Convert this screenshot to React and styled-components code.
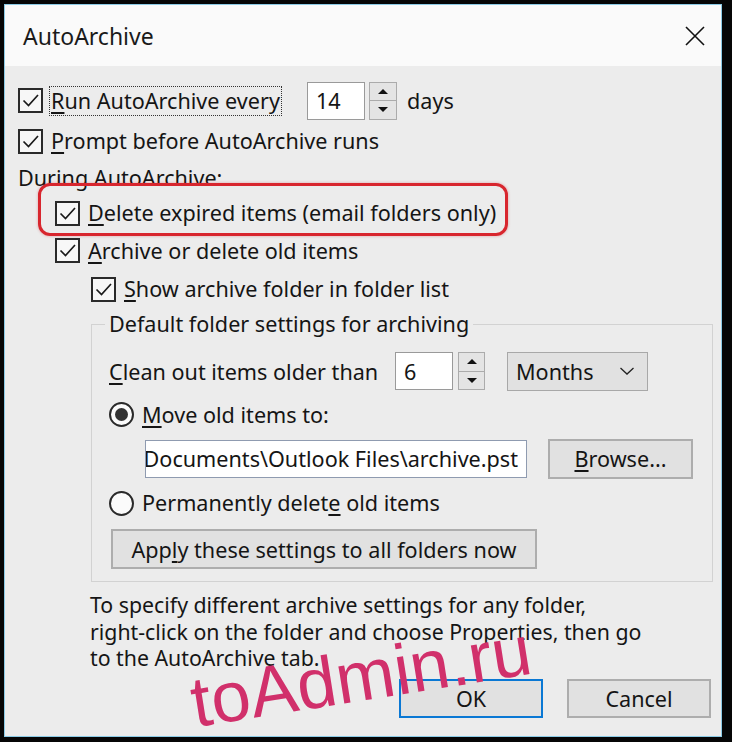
import React from 'react';
import styled, { createGlobalStyle } from 'styled-components';

const GlobalStyle = createGlobalStyle`
  html, body { margin: 0; padding: 0; background: #060606; }
  body { font-family: "Noto Sans", "Liberation Sans", sans-serif; }
`;

const Frame = styled.div`
  width: 732px;
  height: 742px;
  box-sizing: border-box;
  padding: 4px 10px 5px 4px;
  background: #060606;
`;

const Dialog = styled.div`
  position: relative;
  height: 100%;
  box-sizing: border-box;
  border: 1px solid #8ccbe6;
  background: #ececec;
  display: flex;
  flex-direction: column;
  color: #151515;
  font-size: 21.6px;
`;

const TitleBar = styled.div`
  height: 61px;
  flex: none;
  background: #fafafa;
  display: flex;
  align-items: center;
  justify-content: space-between;
  padding: 0 14px 0 18px;
`;

const TitleText = styled.div`
  font-size: 23px;
  color: #1a1a1a;
`;

const Body = styled.div`
  flex: 1;
  display: flex;
  flex-direction: column;
  padding: 14px 8px 18px 13px;
`;

const Row = styled.div`
  position: relative;
  display: flex;
  align-items: center;
  height: ${p => p.$h}px;
  margin-top: ${p => p.$mt || 0}px;
  padding-left: ${p => p.$indent || 0}px;
  flex: none;
`;

const Box = styled.span`
  width: 25px;
  height: 25px;
  box-sizing: border-box;
  border: 2px solid #2a2a2a;
  background: #f7f7f7;
  display: inline-flex;
  align-items: center;
  justify-content: center;
  flex: none;
  margin-right: ${p => p.$gap ?? 8}px;
`;

const RadioCircle = styled.span`
  width: 25px;
  height: 25px;
  box-sizing: border-box;
  border: 2px solid #2a2a2a;
  border-radius: 50%;
  background: #fbfbfb;
  display: inline-flex;
  align-items: center;
  justify-content: center;
  flex: none;
  margin-right: 8px;
`;

const RadioDot = styled.span`
  width: 13px;
  height: 13px;
  border-radius: 50%;
  background: #333;
`;

const Label = styled.span`
  white-space: nowrap;
  line-height: 26px;
`;

const FocusLabel = styled.span`
  white-space: nowrap;
  box-sizing: border-box;
  width: 233px;
  height: 30px;
  line-height: 28px;
  padding: 0 1px;
  border: 1px dotted #333;
`;

const FixedLabel = styled.span`
  white-space: nowrap;
  width: ${p => p.$w}px;
  flex: none;
`;

const Acc = styled.span`
  text-decoration: underline;
  text-underline-offset: 3px;
  text-decoration-thickness: 1.5px;
`;

const NumInput = styled.div`
  width: 58px;
  height: 38px;
  box-sizing: border-box;
  border: 1px solid #9a9a9a;
  background: #fff;
  padding-left: 8px;
  display: flex;
  align-items: center;
  margin-left: ${p => p.$ml || 0}px;
  flex: none;
`;

const Spinner = styled.div`
  width: ${p => p.$w || 28}px;
  height: 38px;
  margin-left: ${p => p.$ml || 4}px;
  display: flex;
  flex-direction: column;
  flex: none;
`;

const SpinHalf = styled.div`
  flex: 1;
  box-sizing: border-box;
  border: 1px solid #ababab;
  background: #e4e4e4;
  display: flex;
  align-items: center;
  justify-content: center;
  & + & { border-top: none; }
`;

const Tri = styled.span`
  width: 0;
  height: 0;
  border-left: 5px solid transparent;
  border-right: 5px solid transparent;
  ${p => p.$up ? 'border-bottom: 5px solid #111;' : 'border-top: 5px solid #111;'}
`;

const Days = styled.span`
  margin-left: 10px;
`;

const Group = styled.fieldset`
  margin: 3px 0 0 73px;
  padding: 0 0 12px 0;
  border: 1px solid #d2d2d2;
  min-inline-size: 0;
`;

const Legend = styled.legend`
  margin-left: 13px;
  padding: 0 4px;
  line-height: 26px;
`;

const GroupContent = styled.div`
  display: flex;
  flex-direction: column;
  padding-left: 17px;
`;

const Select = styled.div`
  width: 141px;
  height: 39px;
  box-sizing: border-box;
  margin-left: 22px;
  border: 1px solid #a8a8a8;
  background: #e1e1e1;
  display: flex;
  align-items: center;
  justify-content: space-between;
  padding: 0 12px 0 8px;
  flex: none;
`;

const PathInput = styled.div`
  width: 382px;
  height: 38px;
  box-sizing: border-box;
  border: 1px solid #8f9bb0;
  background: #fff;
  display: flex;
  align-items: center;
  justify-content: flex-end;
  padding-right: 8px;
  overflow: hidden;
  white-space: nowrap;
  flex: none;
`;

const Button = styled.div`
  width: ${p => p.$w}px;
  height: ${p => p.$h || 40}px;
  box-sizing: border-box;
  border: ${p => p.$primary ? '2px solid #0a78d4' : '2px solid #adadad'};
  background: #e1e1e1;
  display: flex;
  align-items: center;
  justify-content: center;
  margin-left: ${p => p.$ml || 0}px;
  white-space: nowrap;
  flex: none;
`;

const Para = styled.p`
  margin: 10px 0 0 72px;
  line-height: 26.5px;
  font-size: 21.3px;
  white-space: nowrap;
`;

const Footer = styled.div`
  margin-top: auto;
  display: flex;
  justify-content: flex-end;
  gap: 24px;
  padding-right: 2px;
`;

const Highlight = styled.div`
  position: absolute;
  left: 20px;
  top: -12px;
  width: 470px;
  height: 53px;
  box-sizing: border-box;
  border: 3px solid #d8262e;
  border-radius: 12px;
  box-shadow: 0 0 3px rgba(200, 20, 30, 0.35);
  pointer-events: none;
`;

const Watermark = styled.div`
  position: absolute;
  left: 192px;
  top: 662px;
  font-family: "Liberation Sans", Arial, sans-serif;
  font-size: 71px;
  line-height: 1;
  color: #d1306b;
  transform: rotate(-9deg);
  transform-origin: left bottom;
  white-space: nowrap;
  pointer-events: none;
`;

const Check = () => (
  <svg width="21" height="21" viewBox="0 0 21 21">
    <path d="M3.5 10.5 L8.5 15.5 L18 5" fill="none" stroke="#1a1a1a" strokeWidth="1.7" />
  </svg>
);

const CheckBox = ({ gap }) => (
  <Box $gap={gap}><Check /></Box>
);

const SpinButtons = ({ w, ml }) => (
  <Spinner $w={w} $ml={ml}>
    <SpinHalf><Tri $up /></SpinHalf>
    <SpinHalf><Tri /></SpinHalf>
  </Spinner>
);

const CloseIcon = () => (
  <svg width="24" height="24" viewBox="0 0 24 24">
    <path d="M3 3 L21 21 M21 3 L3 21" stroke="#111" strokeWidth="1.6" fill="none" />
  </svg>
);

const Chevron = () => (
  <svg width="16" height="10" viewBox="0 0 16 10">
    <path d="M1.5 2 L8 8 L14.5 2" stroke="#222" strokeWidth="1.3" fill="none" />
  </svg>
);

export default function App() {
  return (
    <Frame>
      <GlobalStyle />
      <Dialog>
        <TitleBar>
          <TitleText>AutoArchive</TitleText>
          <CloseIcon />
        </TitleBar>
        <Body>
          <Row $h={41}>
            <CheckBox gap={6} />
            <FocusLabel><Acc>R</Acc>un AutoArchive every</FocusLabel>
            <NumInput $ml={25}>14</NumInput>
            <SpinButtons />
            <Days>days</Days>
          </Row>
          <Row $h={40}>
            <CheckBox />
            <Label><Acc>P</Acc>rompt before AutoArchive runs</Label>
          </Row>
          <Row $h={34}>
            <Label>During AutoArchive:</Label>
          </Row>
          <Row $h={36} $indent={37}>
            <CheckBox />
            <Label><Acc>D</Acc>elete expired items (email folders only)</Label>
            <Highlight />
          </Row>
          <Row $h={39} $indent={37}>
            <CheckBox />
            <Label><Acc>A</Acc>rchive or delete old items</Label>
          </Row>
          <Row $h={38} $indent={73}>
            <CheckBox />
            <Label><Acc>S</Acc>how archive folder in folder list</Label>
          </Row>
          <Group>
            <Legend>Default folder settings for archiving</Legend>
            <GroupContent>
              <Row $h={40} $mt={14}>
                <FixedLabel $w={286}><Acc>C</Acc>lean out items older than</FixedLabel>
                <NumInput>6</NumInput>
                <SpinButtons w={27} ml={5} />
                <Select>
                  <span>Months</span>
                  <Chevron />
                </Select>
              </Row>
              <Row $h={41} $mt={3}>
                <RadioCircle><RadioDot /></RadioCircle>
                <Label><Acc>M</Acc>ove old items to:</Label>
              </Row>
              <Row $h={41} $mt={3} $indent={36}>
                <PathInput>Documents\Outlook Files\archive.pst</PathInput>
                <Button $w={145} $h={40} $ml={21}><span><Acc>B</Acc>rowse...</span></Button>
              </Row>
              <Row $h={40} $mt={4}>
                <RadioCircle />
                <Label>Permanently delet<Acc>e</Acc> old items</Label>
              </Row>
              <Row $h={40} $mt={6} $indent={2}>
                <Button $w={426} $h={40}><span>App<Acc>l</Acc>y these settings to all folders now</span></Button>
              </Row>
            </GroupContent>
          </Group>
          <Para>
            To specify different archive settings for any folder,<br />
            right-click on the folder and choose Properties, then go<br />
            to the AutoArchive tab.
          </Para>
          <Footer>
            <Button $w={144} $h={39} $primary>OK</Button>
            <Button $w={144} $h={39}>Cancel</Button>
          </Footer>
        </Body>
        <Watermark>toAdmin.ru</Watermark>
      </Dialog>
    </Frame>
  );
}
